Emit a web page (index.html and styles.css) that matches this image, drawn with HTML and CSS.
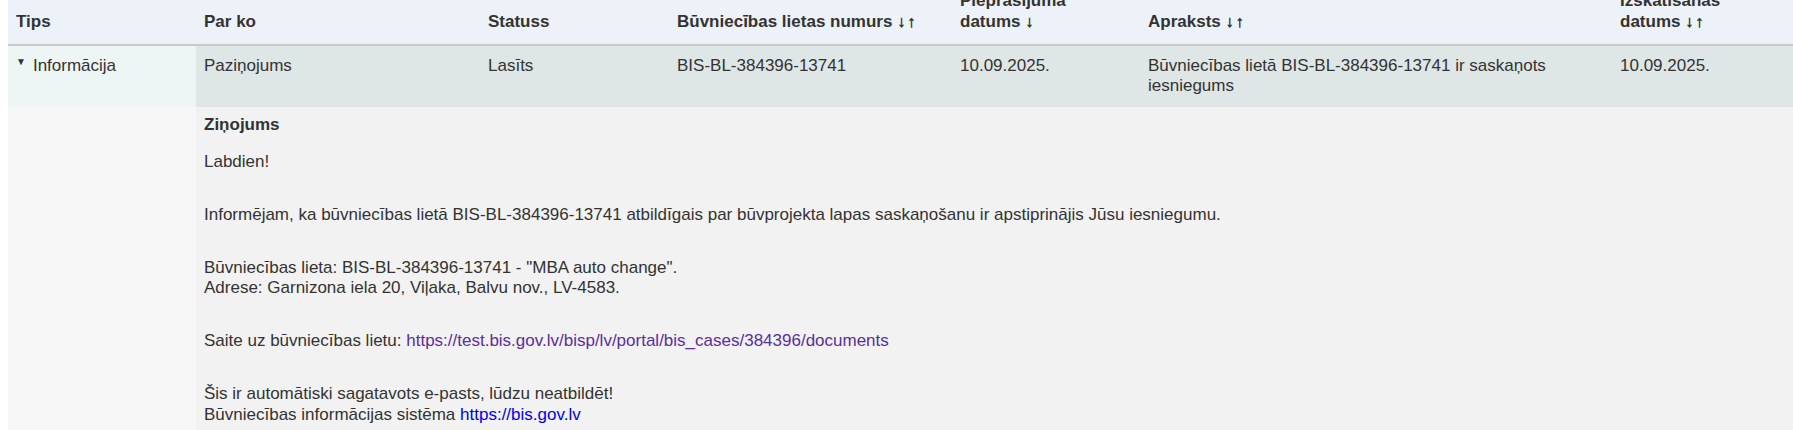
FILE: index.html
```html
<!doctype html>
<html lang="lv">
<head>
    <meta charset="utf-8">
    <meta name="viewport" content="width=device-width, initial-scale=1">
    <title>Paziņojumi</title>
    <link rel="stylesheet" href="styles.css">
</head>
<body>

    <table class="notices">
        <colgroup>
            <col class="col-type">
            <col class="col-about">
            <col class="col-status">
            <col class="col-case">
            <col class="col-date">
            <col class="col-desc">
            <col>
        </colgroup>
        <thead>
            <tr>
                <th>Tips</th>
                <th>Par ko</th>
                <th>Statuss</th>
                <th>Būvniecības lietas numurs&nbsp;<span class="sort">↓↑</span></th>
                <th>Pieprasījuma datums&nbsp;<span class="sort">↓</span></th>
                <th>Apraksts&nbsp;<span class="sort">↓↑</span></th>
                <th>Izskatīšanas datums&nbsp;<span class="sort">↓↑</span></th>
            </tr>
        </thead>
        <tbody>
            <tr class="notice-row">
                <td class="type-cell"><span class="caret">▼</span>Informācija</td>
                <td>Paziņojums</td>
                <td>Lasīts</td>
                <td>BIS-BL-384396-13741</td>
                <td>10.09.2025.</td>
                <td>Būvniecības lietā BIS-BL-384396-13741 ir saskaņots iesniegums</td>
                <td>10.09.2025.</td>
            </tr>
            <tr class="detail-row">
                <td class="type-cell"></td>
                <td colspan="6" class="message">
                    <h4>Ziņojums</h4>
                    <p>Labdien!</p>
                    <p>Informējam, ka būvniecības lietā BIS-BL-384396-13741 atbildīgais par būvprojekta lapas saskaņošanu ir apstiprinājis Jūsu iesniegumu.</p>
                    <p>Būvniecības lieta: BIS-BL-384396-13741 - "MBA auto change".<br>
                    Adrese: Garnizona iela 20, Viļaka, Balvu nov., LV-4583.</p>
                    <p>Saite uz būvniecības lietu: <a class="visited" href="#">https://test.bis.gov.lv/bisp/lv/portal/bis_cases/384396/documents</a></p>
                    <p>Šis ir automātiski sagatavots e-pasts, lūdzu neatbildēt!<br>
                    Būvniecības informācijas sistēma <a href="#">https://bis.gov.lv</a></p>
                </td>
            </tr>
        </tbody>
    </table>

</body>
</html>
```

FILE: styles.css
```css
body {
    font-family: "Liberation Sans", Arial, sans-serif;
    font-size: 17px;
    line-height: 20.8px;
    color: #333;
    background: #fff;
    margin: 0 0 0 8px;
    overflow: hidden;
}

.notices {
    width: 100%;
    border-collapse: collapse;
    table-layout: fixed;
    margin-top: -19px;
}

.col-type { width: 188px; }
.col-about { width: 284px; }
.col-status { width: 189px; }
.col-case { width: 283px; }
.col-date { width: 188px; }
.col-desc { width: 472px; }

.notices th {
    background: #edf2f9;
    text-align: left;
    vertical-align: bottom;
    font-weight: bold;
    padding: 10px 8px 11px;
    border-bottom: 2px solid #c6caca;
}

.notices td {
    vertical-align: top;
    padding: 10px 8px;
}

.sort {
    font-size: 16px;
    font-weight: normal;
    letter-spacing: 2px;
    -webkit-text-stroke: 0.5px #333;
}

.notice-row td {
    background: #dfe6e6;
}

.notice-row td.type-cell {
    background: #eef6f5;
}

.caret {
    font-size: 10px;
    line-height: 0;
    vertical-align: 6px;
    margin-right: 7px;
}

.detail-row td {
    background: #f2f2f2;
}

.detail-row td.type-cell {
    background: #f7f7f7;
}

.detail-row td.message {
    padding-top: 8px;
    padding-bottom: 6px;
}

.message h4 {
    margin: 0 0 16px;
    font-size: 17px;
}

.message p {
    margin: 0 0 32px;
}

.message p:last-child {
    margin-bottom: 0;
}

.message a {
    color: #0000ee;
    text-decoration: none;
}

.message a.visited {
    color: #5c2d9e;
}
```
